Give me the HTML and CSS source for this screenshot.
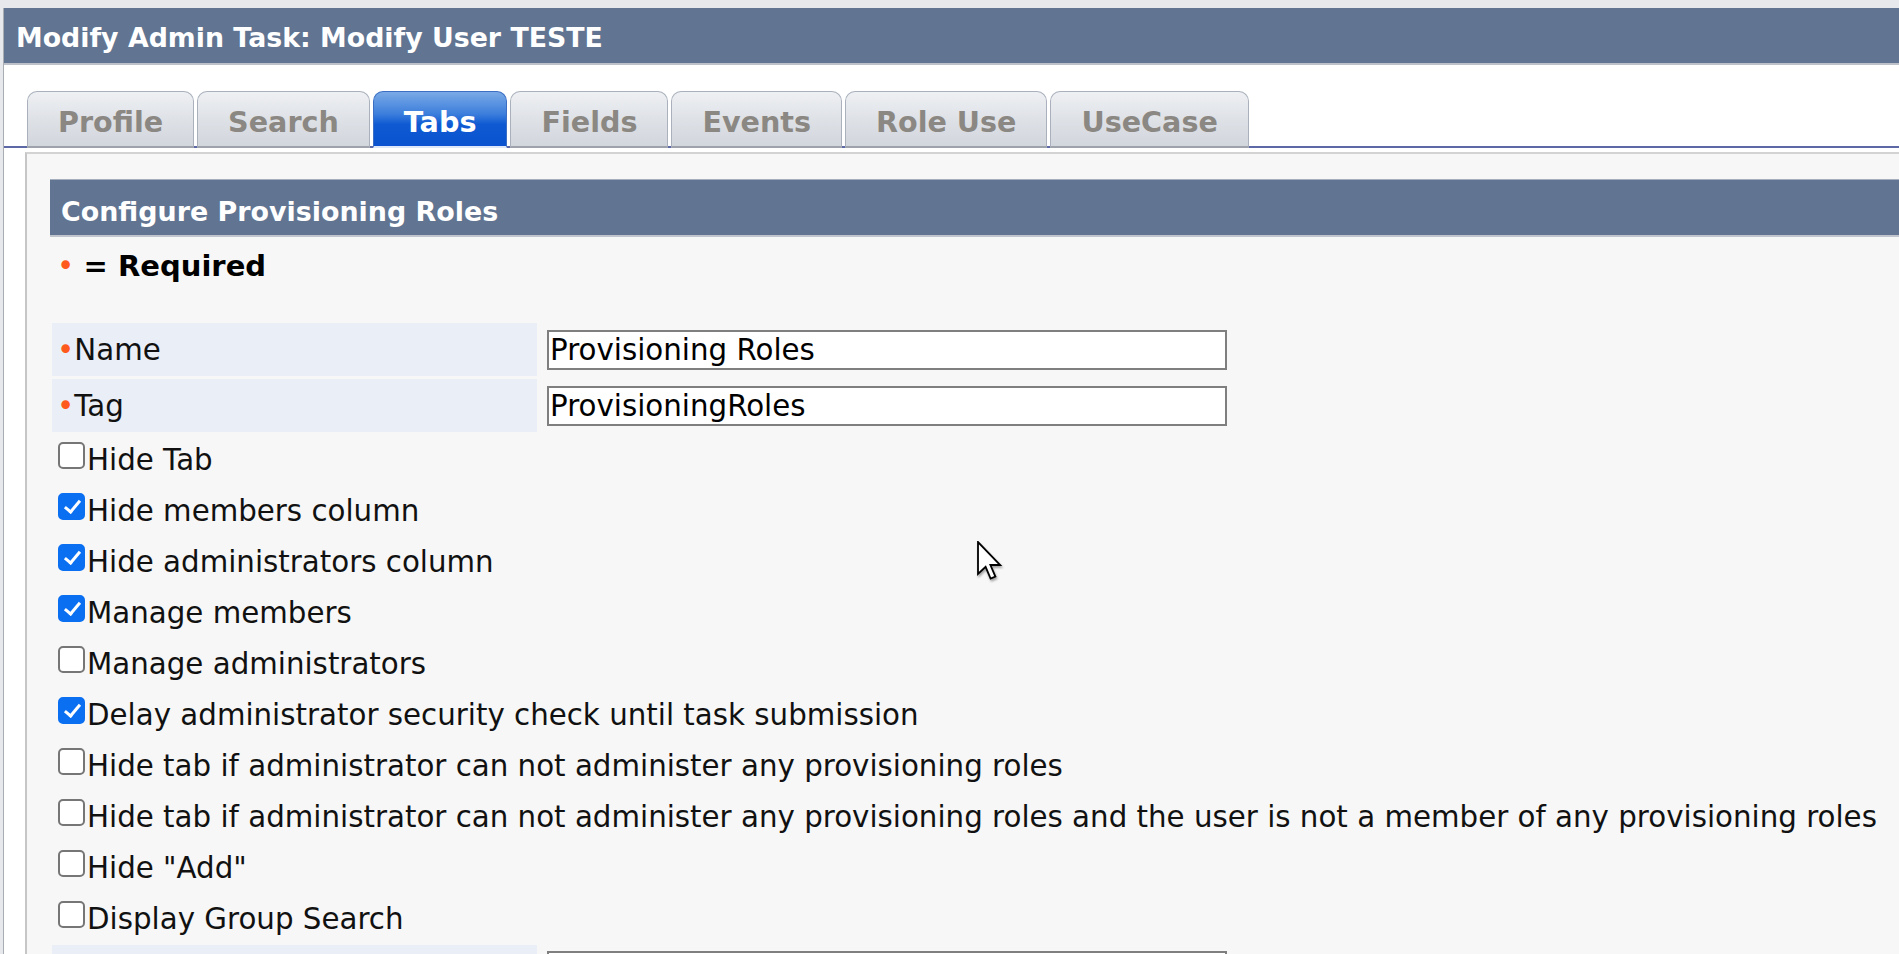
FILE: index.html
```html
<!DOCTYPE html>
<html lang="en">
<head>
<meta charset="utf-8">
<title>Modify Admin Task</title>
<link rel="stylesheet" href="styles.css">
</head>
<body>
<div class="window">
  <div class="titlebar">Modify Admin Task: Modify User TESTE</div>
  <div class="tabstrip">
    <div class="tab">Profile</div>
    <div class="tab">Search</div>
    <div class="tab active">Tabs</div>
    <div class="tab">Fields</div>
    <div class="tab">Events</div>
    <div class="tab">Role Use</div>
    <div class="tab">UseCase</div>
  </div>
  <div class="panel">
    <div class="section-header">Configure Provisioning Roles</div>
    <div class="required"><span class="req">•</span> <b>= Required</b></div>
    <div class="form">
      <div class="field">
        <div class="label"><span class="req">•</span>Name</div>
        <div class="value"><input class="text" type="text" value="Provisioning Roles"></div>
      </div>
      <div class="field">
        <div class="label"><span class="req">•</span>Tag</div>
        <div class="value"><input class="text" type="text" value="ProvisioningRoles"></div>
      </div>
    </div>
    <div class="checks">
      <label class="check"><input type="checkbox">Hide Tab</label>
      <label class="check"><input type="checkbox" checked>Hide members column</label>
      <label class="check"><input type="checkbox" checked>Hide administrators column</label>
      <label class="check"><input type="checkbox" checked>Manage members</label>
      <label class="check"><input type="checkbox">Manage administrators</label>
      <label class="check"><input type="checkbox" checked>Delay administrator security check until task submission</label>
      <label class="check"><input type="checkbox">Hide tab if administrator can not administer any provisioning roles</label>
      <label class="check"><input type="checkbox">Hide tab if administrator can not administer any provisioning roles and the user is not a member of any provisioning roles</label>
      <label class="check"><input type="checkbox">Hide "Add"</label>
      <label class="check"><input type="checkbox">Display Group Search</label>
    </div>
    <div class="form">
      <div class="field">
        <div class="label">&nbsp;</div>
        <div class="value"><input class="text" type="text" value=""></div>
      </div>
    </div>
  </div>
</div>
<div class="cursor">
  <svg width="26" height="42" viewBox="0 0 13 21" xmlns="http://www.w3.org/2000/svg">
    <path d="M0.5 0.5 L0.5 16.5 L4.3 12.9 L6.8 18.8 L9.2 17.8 L6.7 12 L11.6 12 Z" fill="#fff" stroke="#000" stroke-width="0.9" stroke-linejoin="miter"/>
  </svg>
</div>
</body>
</html>
```

FILE: styles.css
```css
html, body {
  margin: 0;
  padding: 0;
  overflow: hidden;
}

body {
  background: #e6e8ec;
  font-family: "DejaVu Sans", Verdana, sans-serif;
  color: #111;
  height: 954px;
  position: relative;
}

.window {
  margin: 8px 0 0 3px;
  border-left: 1px solid #a9adb4;
  background: #fff;
  min-height: 946px;
}

.titlebar {
  background: #617592;
  color: #fff;
  font-weight: bold;
  font-size: 26.8px;
  padding: 4px 0 0 12px;
  line-height: 51px;
  border-bottom: 2px solid #bcc1ca;
  white-space: nowrap;
}

.tabstrip {
  display: flex;
  gap: 3px;
  padding: 26px 0 0 23px;
  border-bottom: 2px solid #5d68a6;
}

.tab {
  margin-bottom: -2px;
  padding: 6px 30px 0;
  line-height: 48px;
  font-size: 28.6px;
  font-weight: bold;
  color: #8b8782;
  background: linear-gradient(#eef0f3, #dde0e5 55%, #d2d6dd);
  border: 1px solid #aab1bc;
  border-bottom: 2px solid #9ea3ab;
  border-radius: 10px 10px 0 0;
  white-space: nowrap;
}

.tab.active {
  color: #fff;
  background: linear-gradient(#7aa9e6, #3d7fdc 40%, #0f5ad3 60%, #0a52cf);
  border-color: #3c6fc4;
  border-bottom: 2px solid #dce8fa;
}

.panel {
  margin: 4px 0 0 21px;
  border-top: 2px solid #d3d3d3;
  border-left: 2px solid #c6c6c6;
  background: #f7f7f7;
  padding: 25px 0 0 23px;
  min-height: 800px;
}

.section-header {
  background: #617592;
  color: #fff;
  font-weight: bold;
  font-size: 26.9px;
  border-top: 1px solid #a5aebd;
  border-bottom: 2px solid #c0c5cd;
  padding: 8px 0 0 11px;
  line-height: 47px;
  white-space: nowrap;
}

.required {
  margin-top: 9px;
  padding-left: 7px;
  font-size: 29.3px;
  line-height: 40px;
  color: #000;
}

.required b {
  font-size: 29px;
}

.req {
  color: #ff5a1e;
}

.form {
  margin-top: 37px;
  padding-left: 2px;
  display: flex;
  flex-direction: column;
  gap: 3px;
}

.checks + .form {
  margin-top: 0;
}

.field {
  display: grid;
  grid-template-columns: 485px 1fr;
  column-gap: 3px;
  height: 53px;
}

.label {
  background: #eaeef6;
  display: flex;
  align-items: center;
  padding-left: 5px;
  font-size: 29.3px;
}

.value {
  display: flex;
  align-items: center;
  padding-left: 7px;
}

.text {
  box-sizing: border-box;
  width: 680px;
  height: 40px;
  margin: 0;
  padding: 0 0 0 1px;
  border: 2px solid #7f7f7f;
  background: #fff;
  color: #000;
  font-family: "DejaVu Sans", Verdana, sans-serif;
  font-size: 29.3px;
  outline: none;
}

.checks {
  margin-top: 2.5px;
  padding-left: 8px;
}

.check {
  display: block;
  height: 51px;
  line-height: 51px;
  font-size: 29.3px;
  white-space: nowrap;
}

.check input {
  appearance: none;
  -webkit-appearance: none;
  position: relative;
  box-sizing: border-box;
  width: 27px;
  height: 27px;
  margin: 0 2px 1px 0;
  vertical-align: baseline;
  border: 2px solid #767676;
  border-radius: 5px;
  background: #fff;
}

.check input:checked {
  background: #0b6ff2;
  border-color: #0b6ff2;
}

.check input:checked::after {
  content: "";
  position: absolute;
  left: 7.5px;
  top: 2px;
  width: 6px;
  height: 13px;
  border-right: 3.5px solid #fff;
  border-bottom: 3.5px solid #fff;
  transform: rotate(40deg);
}

.cursor {
  position: absolute;
  left: 977px;
  top: 541px;
  width: 26px;
  height: 42px;
  filter: drop-shadow(1px 2px 1px rgba(0, 0, 0, 0.35));
}

.cursor svg {
  display: block;
}
```
